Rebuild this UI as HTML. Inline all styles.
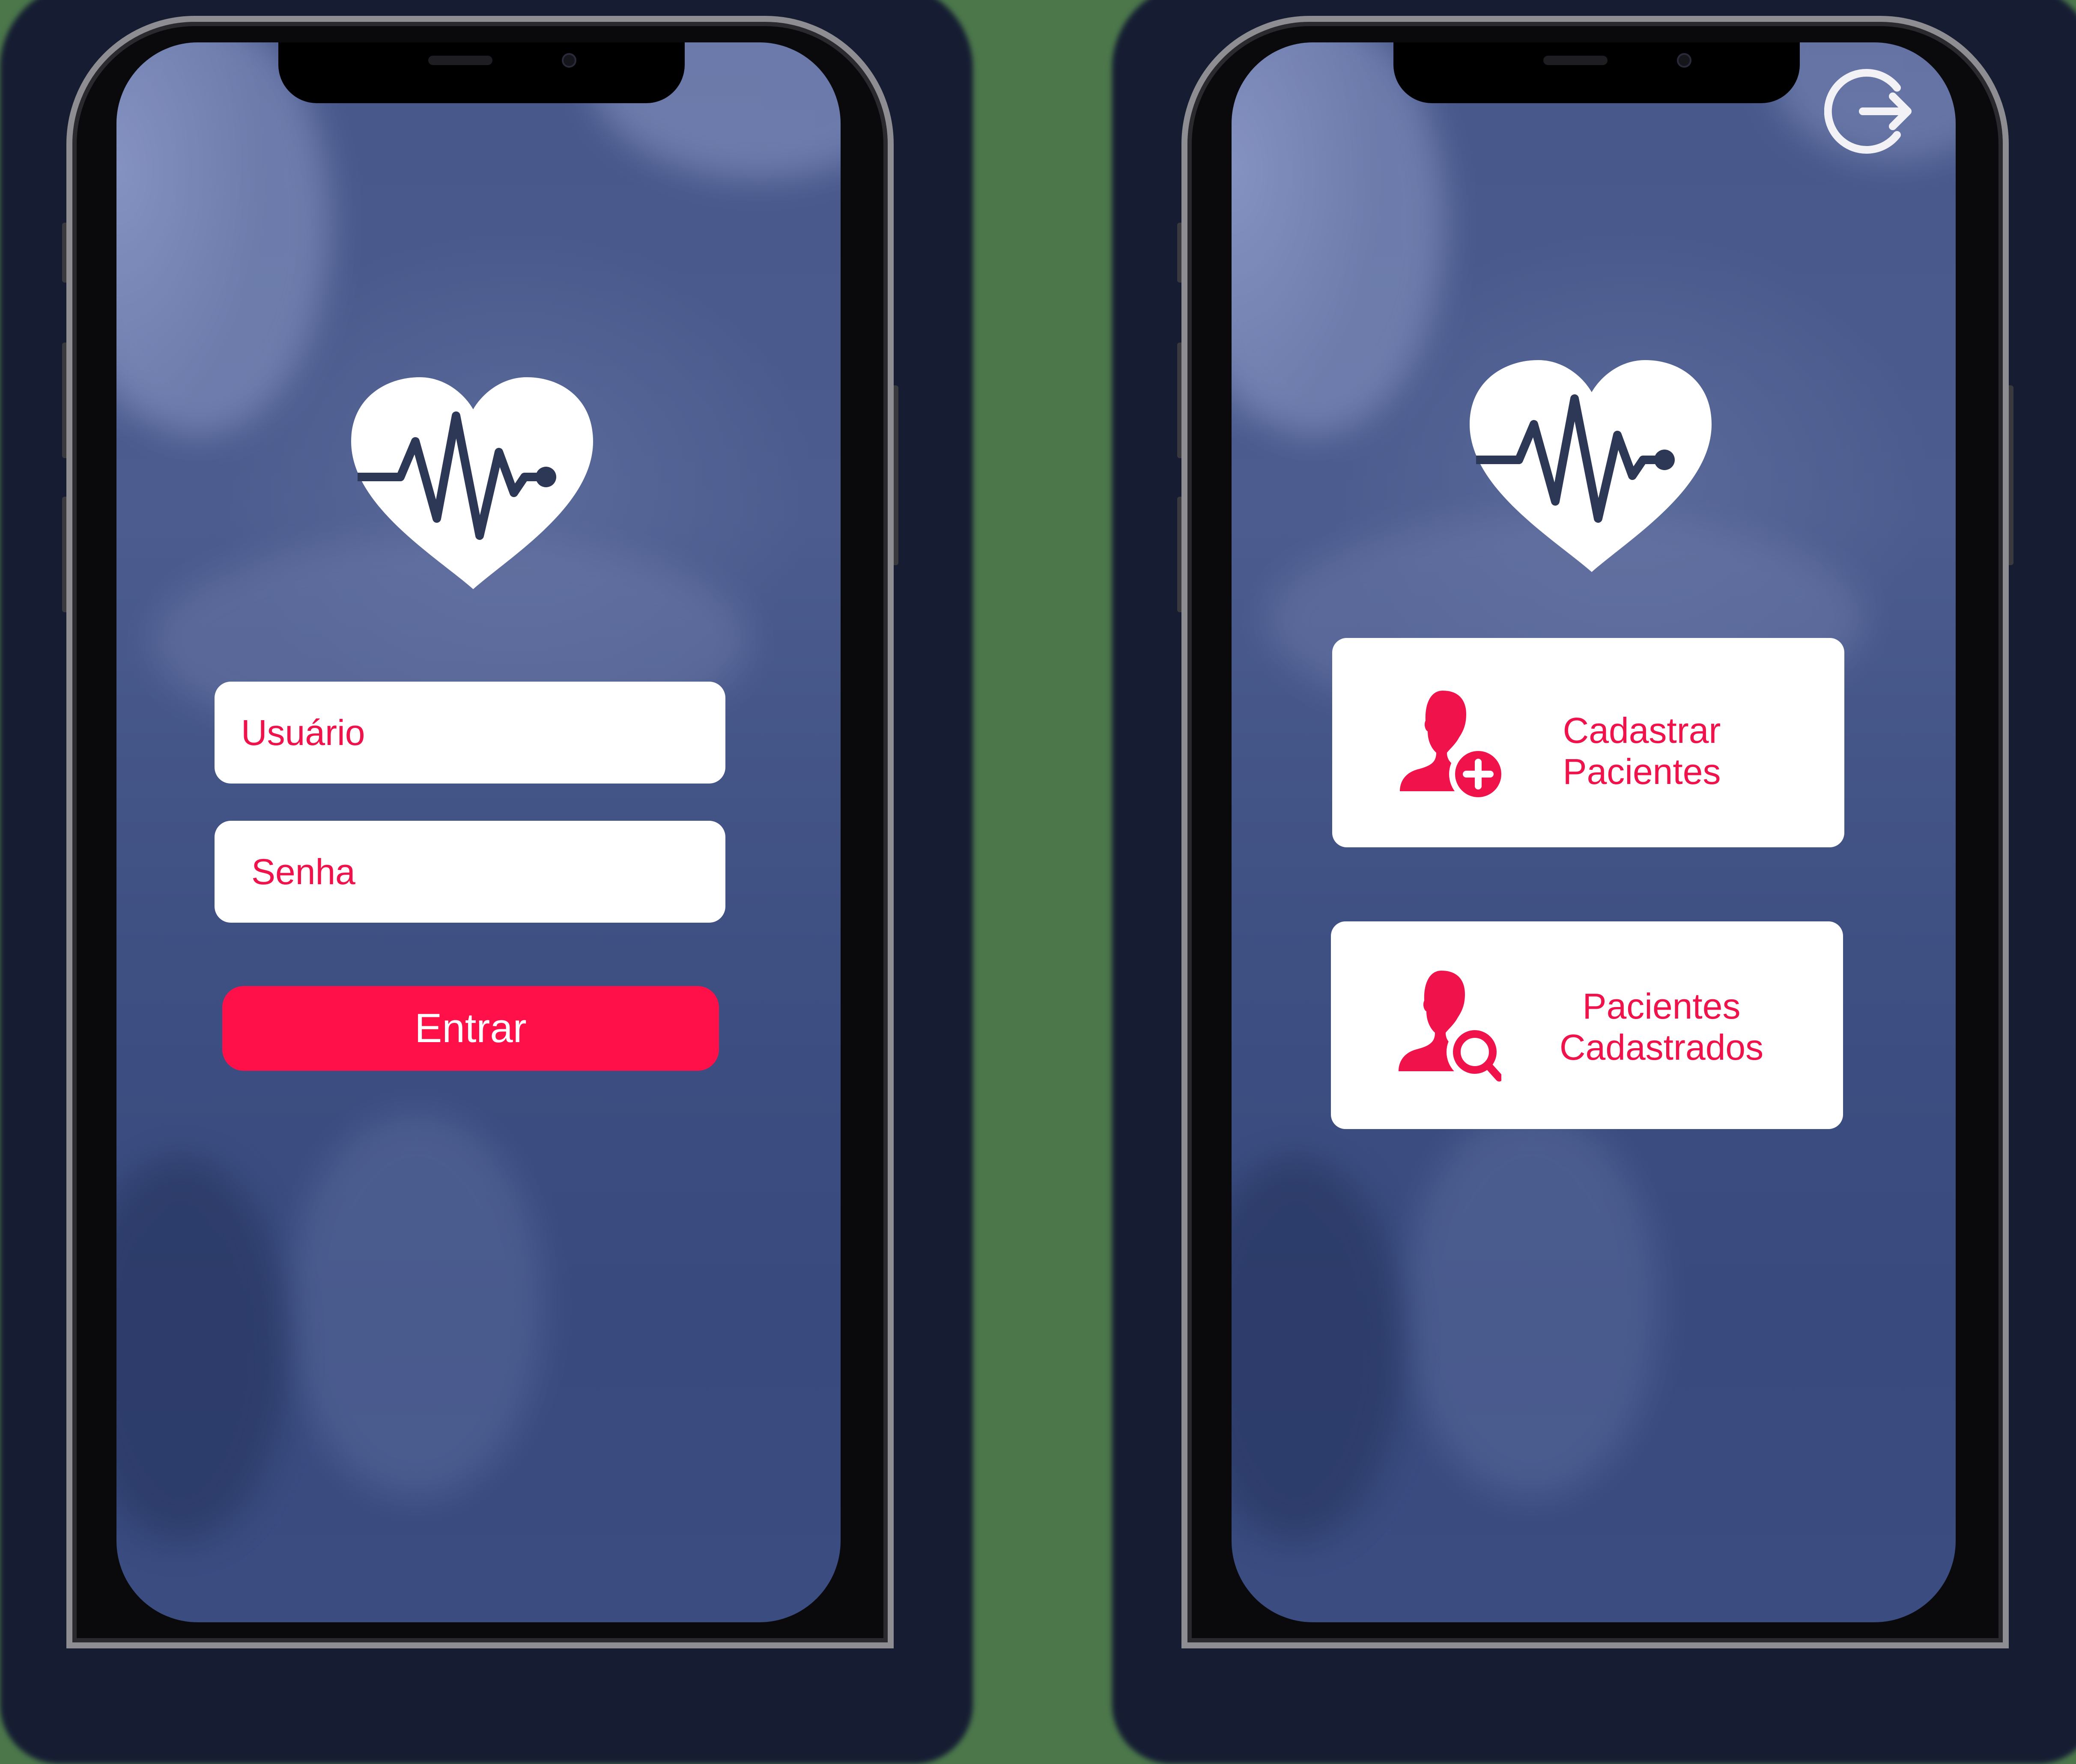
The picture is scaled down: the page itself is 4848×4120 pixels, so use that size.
<!DOCTYPE html>
<html><head><meta charset="utf-8"><style>
*{margin:0;padding:0;box-sizing:border-box}
body{width:4848px;height:4084px;background:#4b774b;position:relative;overflow:hidden;font-family:"Liberation Sans",sans-serif}
.halo{position:absolute;background:#161d33;border-radius:200px 200px 140px 140px;filter:blur(6px)}
.frame{position:absolute;top:37px;width:1932px;height:3813px;border-radius:300px 300px 0 0;background:#0a0a0c;border:14px solid #8e8e92;box-shadow:inset 0 0 0 10px #2a2a2e}
.screen{position:absolute;top:99px;width:1691px;height:3690px;border-radius:190px;overflow:hidden;
background:radial-gradient(ellipse 700px 600px at 55% 28%,#5a6a9a 0%,rgba(90,106,154,0) 100%),radial-gradient(ellipse 500px 900px at 0% 8%,#7d8cbc 0%,rgba(125,140,188,0) 70%),linear-gradient(180deg,#475789 0%,#4c5c8e 30%,#3f5083 55%,#384a7e 80%,#3a4c80 100%)}
.shade{position:absolute;border-radius:50%;filter:blur(40px)}
.notch{position:absolute;top:99px;width:949px;height:142px;background:#000;border-radius:0 0 90px 90px}
.spk{position:absolute;width:150px;height:22px;background:#1e1e22;border-radius:11px;top:130px}
.cam{position:absolute;width:34px;height:34px;background:#15151c;border-radius:50%;top:124px;border:4px solid #2a2a3a}
.field{position:absolute;background:#fff;border-radius:38px;color:#f0124a;font-size:84px;display:flex;align-items:center}
.btn{position:absolute;background:#ff1048;border-radius:50px;color:#fff;font-size:96px;display:flex;align-items:center;justify-content:center}
.card{position:absolute;background:#fff;border-radius:34px;color:#f0124a;font-size:84px;line-height:96px;text-align:center}
.side{position:absolute;width:16px;background:#3a3a3e;border-radius:6px}
</style></head><body>
<div class="halo" style="left:0;top:-40px;width:2272px;height:4160px"></div>
<div class="halo" style="left:2597px;top:-40px;width:2300px;height:4160px"></div>

<!-- LEFT PHONE -->
<div class="side" style="left:145px;top:520px;height:140px"></div>
<div class="side" style="left:145px;top:800px;height:270px"></div>
<div class="side" style="left:145px;top:1160px;height:270px"></div>
<div class="side" style="left:2082px;top:900px;height:420px"></div>
<div class="frame" style="left:155px"></div>
<div class="screen" style="left:272px">
  <div class="shade" style="left:-120px;top:-80px;width:620px;height:1000px;background:#8a98c6;opacity:.55"></div>
  <div class="shade" style="left:1100px;top:-200px;width:800px;height:520px;background:#8a98c6;opacity:.55"></div>
  <div class="shade" style="left:80px;top:1150px;width:1400px;height:500px;background:#6b79a8;opacity:.5"></div>
  <div class="shade" style="left:400px;top:2500px;width:600px;height:900px;background:#6a79aa;opacity:.35"></div>
  <div class="shade" style="left:-100px;top:2600px;width:500px;height:900px;background:#26345e;opacity:.6"></div>
</div>
<div class="notch" style="left:650px"></div>
<div class="spk" style="left:1000px"></div>
<div class="cam" style="left:1312px"></div>
<svg style="position:absolute;left:820px;top:881px" width="570" height="500" viewBox="0 0 570 500">
 <path d="M285 495 C200 420 0 300 0 150 C0 50 80 0 160 0 C220 0 265 40 285 75 C305 40 350 0 410 0 C490 0 565 50 565 150 C565 300 370 420 285 495Z" fill="#fff"/>
 <path d="M15 233 H115 L150 150 L200 330 L245 90 L300 370 L345 175 L380 270 L405 233 H455" fill="none" stroke="#2d3756" stroke-width="20" stroke-linejoin="round"/>
 <circle cx="455" cy="233" r="24" fill="#2d3756"/>
</svg>
<div class="field" style="left:501px;top:1592px;width:1193px;height:238px;padding-left:62px">Usuário</div>
<div class="field" style="left:501px;top:1917px;width:1193px;height:238px;padding-left:86px">Senha</div>
<div class="btn" style="left:519px;top:2303px;width:1160px;height:198px">Entrar</div>

<!-- RIGHT PHONE -->
<div class="side" style="left:2749px;top:520px;height:140px"></div>
<div class="side" style="left:2749px;top:800px;height:270px"></div>
<div class="side" style="left:2749px;top:1160px;height:270px"></div>
<div class="side" style="left:4686px;top:900px;height:420px"></div>
<div class="frame" style="left:2759px"></div>
<div class="screen" style="left:2876px">
  <div class="shade" style="left:-120px;top:-80px;width:620px;height:1000px;background:#8a98c6;opacity:.55"></div>
  <div class="shade" style="left:1250px;top:-200px;width:600px;height:480px;background:#8a98c6;opacity:.45"></div>
  <div class="shade" style="left:80px;top:1100px;width:1400px;height:500px;background:#6b79a8;opacity:.5"></div>
  <div class="shade" style="left:400px;top:2500px;width:600px;height:900px;background:#6a79aa;opacity:.35"></div>
  <div class="shade" style="left:-100px;top:2600px;width:500px;height:900px;background:#26345e;opacity:.6"></div>
</div>
<div class="notch" style="left:3254px"></div>
<div class="spk" style="left:3604px"></div>
<div class="cam" style="left:3916px"></div>
<svg style="position:absolute;left:4260px;top:155px" width="210" height="210" viewBox="0 0 210 210">
 <path d="M170 50 A90 90 0 1 0 170 160" fill="none" stroke="#f2f2f6" stroke-width="18" stroke-linecap="round"/>
 <path d="M90 105 H195 M160 70 L195 105 L160 140" fill="none" stroke="#f2f2f6" stroke-width="18" stroke-linecap="round" stroke-linejoin="round"/>
</svg>
<svg style="position:absolute;left:3432px;top:841px" width="570" height="500" viewBox="0 0 570 500">
 <path d="M285 495 C200 420 0 300 0 150 C0 50 80 0 160 0 C220 0 265 40 285 75 C305 40 350 0 410 0 C490 0 565 50 565 150 C565 300 370 420 285 495Z" fill="#fff"/>
 <path d="M15 233 H115 L150 150 L200 330 L245 90 L300 370 L345 175 L380 270 L405 233 H455" fill="none" stroke="#2d3756" stroke-width="20" stroke-linejoin="round"/>
 <circle cx="455" cy="233" r="24" fill="#2d3756"/>
</svg>
<div class="card" style="left:3111px;top:1490px;width:1196px;height:489px">
  <svg style="position:absolute;left:158px;top:118px" width="240" height="270" viewBox="0 0 240 270">
   <path d="M100 5 C140 5 155 30 155 60 C155 85 148 100 138 115 C130 130 118 140 110 150 C110 165 118 175 130 180 L135 240 H0 C0 215 15 195 45 188 C75 180 85 170 85 150 C72 138 65 120 65 100 C60 98 55 85 60 75 C58 40 70 5 100 5Z" fill="#f0124a"/>
   <circle cx="183" cy="200" r="68" fill="#fff"/>
   <circle cx="183" cy="200" r="54" fill="#f0124a"/>
   <path d="M183 172 V228 M155 200 H211" stroke="#fff" stroke-width="16" stroke-linecap="round"/>
  </svg>
  <div style="position:absolute;left:473px;top:168px;width:500px;text-align:center">Cadastrar<br>Pacientes</div>
</div>
<div class="card" style="left:3108px;top:2152px;width:1196px;height:485px">
  <svg style="position:absolute;left:158px;top:110px" width="240" height="270" viewBox="0 0 240 270">
   <path d="M100 5 C140 5 155 30 155 60 C155 85 148 100 138 115 C130 130 118 140 110 150 C110 165 118 175 130 180 L135 240 H0 C0 215 15 195 45 188 C75 180 85 170 85 150 C72 138 65 120 65 100 C60 98 55 85 60 75 C58 40 70 5 100 5Z" fill="#f0124a"/>
   <circle cx="178" cy="195" r="66" fill="#fff"/>
   <circle cx="178" cy="195" r="42" fill="none" stroke="#f0124a" stroke-width="18"/>
   <path d="M208 225 L235 255" stroke="#f0124a" stroke-width="18" stroke-linecap="round"/>
  </svg>
  <div style="position:absolute;left:522px;top:150px;width:500px;text-align:center">Pacientes<br>Cadastrados</div>
</div>
</body></html>
